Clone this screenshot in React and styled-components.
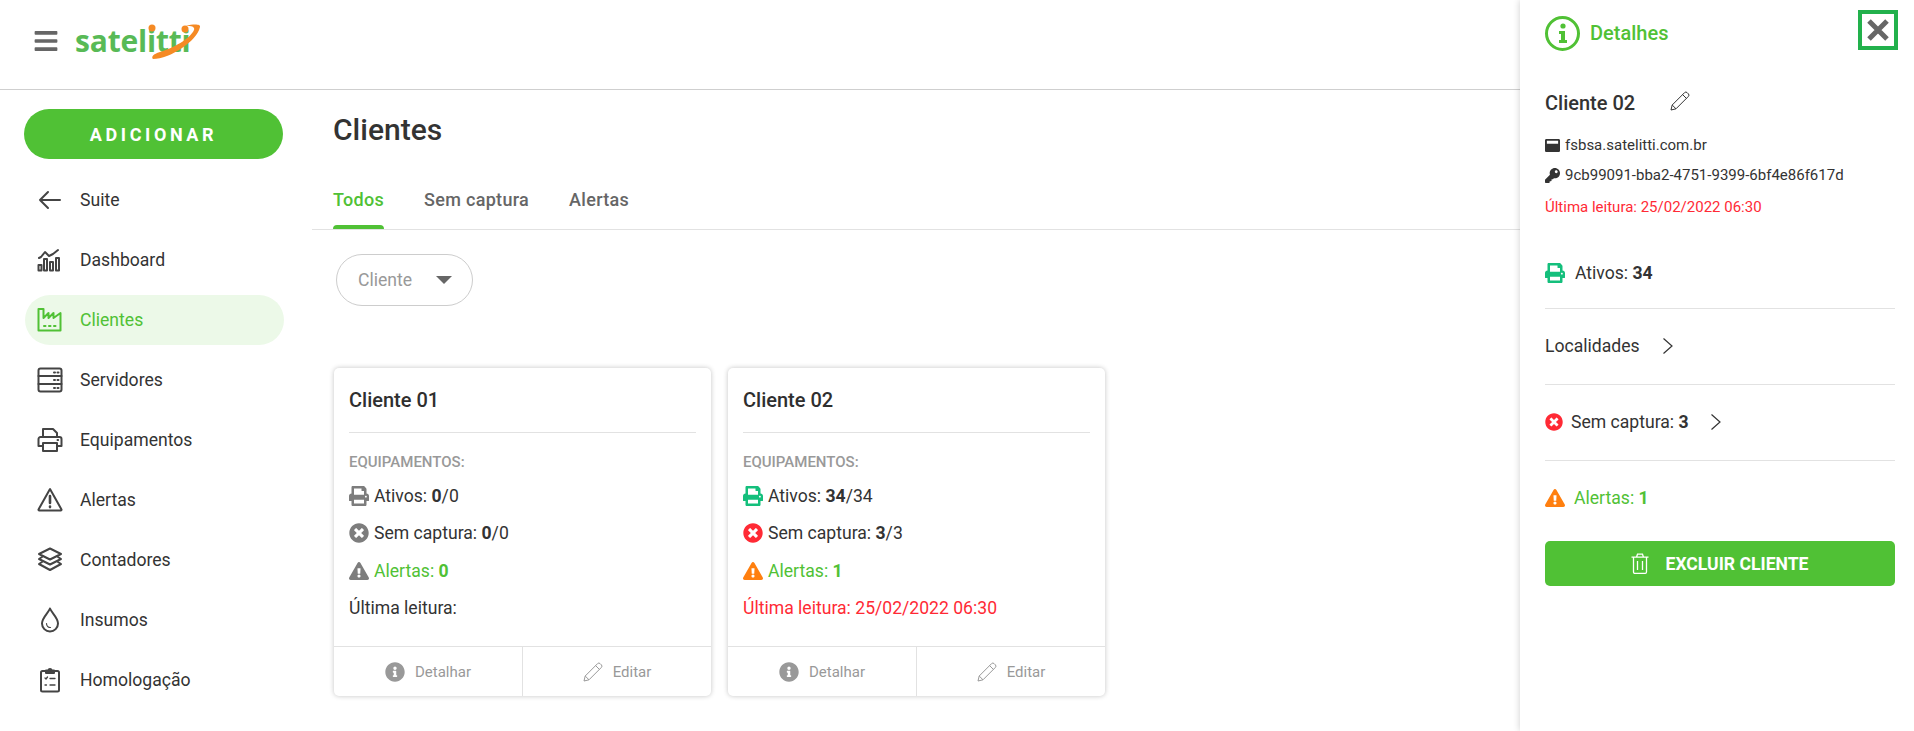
import React from "react";
import styled, { createGlobalStyle } from "styled-components";
import { FaBars, FaExclamationTriangle, FaInfoCircle, FaKey, FaPrint, FaTimesCircle, FaWindowMaximize } from "react-icons/fa";

const GREEN = "#50c135";
const RED = "#ff2a35";
const ORANGE = "#ff7f0f";
const TEAL = "#14bf7c";
const GREY_ICON = "#7d7d7d";

const GlobalStyle = createGlobalStyle`
  html, body {
    margin: 0;
    height: 100%;
    overflow: hidden;
    background: #fff;
  }
  body {
    font-family: Roboto, "Liberation Sans", sans-serif;
    color: #333;
  }
  * { box-sizing: border-box; }
`;

const Page = styled.div`
  display: flex;
  width: 1914px;
  height: 731px;
  overflow: hidden;
`;

const Left = styled.div`
  flex: 1;
  min-width: 0;
  display: flex;
  flex-direction: column;
`;

const Header = styled.header`
  height: 90px;
  flex: none;
  display: flex;
  align-items: center;
  gap: 16px;
  padding: 0 0 8px 33px;
  border-bottom: 1px solid #cfcfcf;
  color: #666;
`;

const LogoWrap = styled.div`
  position: relative;
  width: 130px;
  height: 40px;
`;

const LogoText = styled.span`
  font-family: "Open Sans", sans-serif;
  font-weight: 700;
  font-size: 30px;
  line-height: 40px;
  letter-spacing: -0.2px;
  color: #58ba56;
`;

const LogoOrbit = styled.svg`
  position: absolute;
  left: 0;
  top: 0;
`;

const Body = styled.div`
  flex: 1;
  display: flex;
  min-height: 0;
`;

const Sidebar = styled.nav`
  width: 312px;
  flex: none;
  padding: 19px 0 0 24px;
  display: flex;
  flex-direction: column;
`;

const AddButton = styled.button`
  width: 259px;
  height: 50px;
  flex: none;
  border: 0;
  border-radius: 25px;
  margin-bottom: 16px;
  background: ${GREEN};
  color: #fff;
  font-family: inherit;
  font-size: 18px;
  font-weight: 700;
  letter-spacing: 3.6px;
`;

const NavList = styled.div`
  display: flex;
  flex-direction: column;
  gap: 10px;
`;

const NavItem = styled.a`
  width: 259px;
  height: 50px;
  margin-left: 1px;
  display: flex;
  align-items: center;
  gap: 17px;
  padding-left: 12px;
  border-radius: 25px;
  font-size: 17.6px;
  color: ${(p) => (p.$active ? GREEN : "#333")};
  background: ${(p) => (p.$active ? "#ecf9e8" : "transparent")};
`;

const NavIcon = styled.svg`
  width: 26px;
  height: 26px;
  flex: none;
  fill: none;
  stroke: ${(p) => (p.$active ? GREEN : "#444")};
  stroke-width: 2;
  stroke-linejoin: round;
  stroke-linecap: round;
`;

const Main = styled.main`
  flex: 1;
  min-width: 0;
`;

const Title = styled.h1`
  margin: 20px 0 20px 21px;
  height: 40px;
  font-size: 30px;
  line-height: 40px;
  font-weight: 500;
  color: #333;
`;

const Tabs = styled.div`
  height: 60px;
  display: flex;
  gap: 40px;
  padding-left: 21px;
  border-bottom: 1px solid #e2e2e2;
`;

const Tab = styled.div`
  position: relative;
  height: 60px;
  line-height: 60px;
  font-size: 18px;
  font-weight: 500;
  letter-spacing: 0.3px;
  color: ${(p) => (p.$active ? GREEN : "#666")};

  &::after {
    content: "";
    display: ${(p) => (p.$active ? "block" : "none")};
    position: absolute;
    left: 0;
    right: 0;
    bottom: 1px;
    height: 4px;
    background: ${GREEN};
    border-radius: 4px 4px 0 0;
  }
`;

const Filter = styled.div`
  width: 137px;
  height: 52px;
  margin: 24px 0 0 24px;
  padding: 0 20px 0 21px;
  display: flex;
  align-items: center;
  justify-content: space-between;
  border: 1px solid #cdcdcd;
  border-radius: 26px;
  font-size: 17.6px;
  color: #999;
`;

const Caret = styled.span`
  width: 0;
  height: 0;
  border-left: 8px solid transparent;
  border-right: 8px solid transparent;
  border-top: 8px solid #666;
`;

const Cards = styled.div`
  display: flex;
  gap: 17px;
  margin: 62px 0 0 22px;
`;

const Card = styled.article`
  width: 377px;
  height: 328px;
  display: flex;
  flex-direction: column;
  border-radius: 5px;
  background: #fff;
  box-shadow: 0 0 5px rgba(0, 0, 0, 0.24);
`;

const CardHead = styled.div`
  height: 65px;
  margin: 0 15px;
  border-bottom: 1px solid #e2e2e2;
  font-size: 20px;
  font-weight: 500;
  line-height: 64px;
  color: #2f2f2f;
`;

const CardBody = styled.div`
  padding: 14px 15px 0;
  display: grid;
  grid-template-rows: 30px 37px 38px 37px 37px;
`;

const Caption = styled.div`
  line-height: 30px;
  font-size: 15px;
  font-weight: 500;
  color: #999;
`;

const Line = styled.div`
  display: flex;
  align-items: center;
  gap: 5px;
  font-size: 17.6px;
  color: ${(p) => p.$color || "#333"};

  b { font-weight: 700; }
`;

const CardFooter = styled.div`
  margin-top: auto;
  height: 50px;
  display: grid;
  grid-template-columns: 188px 1fr;
  border-top: 1px solid #e2e2e2;
`;

const FooterAction = styled.div`
  display: flex;
  align-items: center;
  justify-content: center;
  gap: 10px;
  font-size: 15px;
  color: #999;

  & + & { border-left: 1px solid #e2e2e2; }
`;

const Panel = styled.aside`
  width: 394px;
  height: 731px;
  flex: none;
  padding: 0 19px 0 25px;
  position: relative;
  background: #fff;
  box-shadow: 0 0 7px rgba(0, 0, 0, 0.2);
`;

const PanelHead = styled.div`
  height: 66px;
  display: flex;
  align-items: center;
  gap: 10px;
  font-size: 20px;
  font-weight: 500;
  color: ${GREEN};
`;

const InfoRing = styled.span`
  width: 35px;
  height: 35px;
  border: 3px solid ${GREEN};
  border-radius: 50%;
  display: flex;
  align-items: center;
  justify-content: center;
`;

const CloseBox = styled.button`
  width: 40px;
  height: 40px;
  margin: -6px -3px 0 auto;
  padding: 0;
  display: flex;
  align-items: center;
  justify-content: center;
  background: #fff;
  border: 4px solid #22b14c;
`;

const ClientRow = styled.div`
  height: 40px;
  margin-top: 17px;
  display: flex;
  align-items: center;
  gap: 35px;
  font-size: 20px;
  font-weight: 500;
  color: #333;

  svg { margin-top: -5px; }
`;

const MetaList = styled.div`
  margin-top: 7px;
  display: grid;
  grid-auto-rows: 30px;
`;

const Meta = styled.div`
  display: flex;
  align-items: center;
  gap: 5px;
  font-size: 15px;
  color: ${(p) => p.$color || "#333"};
`;

const LastRead = styled.div`
  height: 30px;
  margin-top: 2px;
  line-height: 30px;
  font-size: 15px;
  color: ${RED};
`;

const Sections = styled.div`
  margin-top: 16px;
`;

const Section = styled.div`
  height: ${(p) => p.$height}px;
  padding-bottom: ${(p) => p.$lift || 0}px;
  display: flex;
  align-items: center;
  gap: ${(p) => p.$gap || 8}px;
  font-size: 17.6px;
  color: ${(p) => p.$color || "#333"};
  border-bottom: ${(p) => (p.$plain ? "0" : "1px solid #e2e2e2")};

  b { font-weight: 700; }
`;

const Chevron = styled.svg`
  width: 12px;
  height: 18px;
  margin-left: ${(p) => p.$offset}px;
  fill: none;
  stroke: #333;
  stroke-width: 1.2;
`;

const DeleteButton = styled.button`
  width: 350px;
  height: 45px;
  margin-top: 7px;
  display: flex;
  align-items: center;
  justify-content: center;
  gap: 16px;
  border: 0;
  border-radius: 5px;
  background: ${GREEN};
  color: #fff;
  font-family: inherit;
  font-size: 17.6px;
  font-weight: 700;
`;

const PencilIcon = ({ size, color }) => (
  <svg width={size} height={size} viewBox="0 0 20 20" fill="none" stroke={color} strokeWidth="1" strokeLinejoin="round">
    <path d="M1 19l1.2-5L14.6 1.6a1.8 1.8 0 0 1 2.5 0l1.3 1.3a1.8 1.8 0 0 1 0 2.5L6 17.8z" />
    <path d="M12.6 3.6l3.8 3.8M2.2 14L6 17.8" />
  </svg>
);

const TrashIcon = () => (
  <svg width="18" height="21" viewBox="0 0 18 21" fill="none" stroke="#fff" strokeWidth="1.3">
    <path d="M0.5 4.2h17M2.5 4.2V19a1.3 1.3 0 0 0 1.3 1.3h10.4a1.3 1.3 0 0 0 1.3-1.3V4.2M5.5 4.2l1-3h5l1 3M6.5 8v9M11.5 8v9" />
  </svg>
);

const RightChevron = ({ offset }) => (
  <Chevron $offset={offset} viewBox="0 0 12 18">
    <path d="M1.5 1.5L10 9l-8.5 7.5" />
  </Chevron>
);

const NAV = [
  { label: "Suite", icon: <path d="M23 13H3M11 5l-8 8 8 8" /> },
  {
    label: "Dashboard",
    icon: (
      <>
        <path d="M2 11l2-1 4-5 4 4 4-2 5-4" />
        <rect x="1.500" y="18" width="3" height="5.500" />
        <rect x="7" y="12" width="3" height="11.500" />
        <rect x="13" y="15" width="3" height="8.500" />
        <rect x="19" y="11" width="3" height="12.500" />
      </>
    ),
  },
  {
    label: "Clientes",
    active: true,
    icon: (
      <>
        <path d="M1.500 2h5v9l5-5v5l5-5v5l7-5v17.500h-22z" />
        <path d="M7 19h1.500M12 19h1.500M17 19h1.500" />
      </>
    ),
  },
  {
    label: "Servidores",
    icon: (
      <>
        <rect x="1.500" y="1.500" width="23" height="23" rx="2" />
        <path d="M1.500 9h23M1.500 17h23M17 5.500h1M20.500 5.500h1M17 13h1M20.500 13h1M17 21h1M20.500 21h1" />
      </>
    ),
  },
  {
    label: "Equipamentos",
    icon: (
      <>
        <path d="M6 10V2h10l4 4v4" />
        <path d="M6 19H1.500v-7a2 2 0 0 1 2-2h19a2 2 0 0 1 2 2v7H20" />
        <rect x="6" y="16" width="14" height="8" />
        <path d="M20.500 13h.6" />
      </>
    ),
  },
  {
    label: "Alertas",
    icon: (
      <>
        <path d="M13 2L1.500 22.500a.8.8 0 0 0 .7 1h21.600a.8.8 0 0 0 .7-1z" />
        <path d="M13 9v7M13 19.500v.6" strokeWidth="2.600" />
      </>
    ),
  },
  {
    label: "Contadores",
    icon: (
      <>
        <path d="M13 1.500l11 5.500-11 5.500L2 7z" />
        <path d="M5 10L2 12l11 5.500L24 12l-3-2" />
        <path d="M5 15l-3 2 11 6 11-6-3-2" />
      </>
    ),
  },
  {
    label: "Insumos",
    icon: (
      <>
        <path d="M13 1.500c-2 5-8 9-8 15a8 8 0 0 0 16 0c0-6-6-10-8-15z" />
        <path d="M9.500 16.500c0 2.500 2 4 4 4" strokeWidth="1.200" />
      </>
    ),
  },
  {
    label: "Homologação",
    icon: (
      <>
        <rect x="4" y="4" width="18" height="20.500" rx="1.500" />
        <path d="M9 4V3.500h2.500a1.500 1.500 0 0 1 3 0H17V6H9z" />
        <path d="M8 11l1 1 1.500-2M13 11.500h5M8 18h1.500M13 18h5" strokeWidth="1.300" />
      </>
    ),
  },
];

const CLIENTS = [
  {
    name: "Cliente 01",
    printer: GREY_ICON,
    error: GREY_ICON,
    warning: GREY_ICON,
    active: "0",
    activeTotal: "0",
    missing: "0",
    missingTotal: "0",
    alerts: "0",
    lastRead: "Última leitura:",
    lastColor: "#333",
  },
  {
    name: "Cliente 02",
    printer: TEAL,
    error: RED,
    warning: ORANGE,
    active: "34",
    activeTotal: "34",
    missing: "3",
    missingTotal: "3",
    alerts: "1",
    lastRead: "Última leitura: 25/02/2022 06:30",
    lastColor: RED,
  },
];

const Logo = () => (
  <LogoWrap>
    <LogoText>satelitti</LogoText>
    <LogoOrbit width="130" height="40" viewBox="0 0 130 40" fill="none">
      <circle cx="77" cy="7" r="3.500" fill="#f58a24" />
      <circle cx="110" cy="8" r="3.500" fill="#f58a24" />
      <path d="M78 38C95 38 122 20 125 6C126 3 118 3 111 5C117 4.500 120 6 119 9C115 18 98 27 85 31C78 33 76 36 78 38z" fill="#f58a24" />
    </LogoOrbit>
  </LogoWrap>
);

const App = () => {
  return (
    <Page>
      <GlobalStyle />
      <Left>
        <Header>
          <FaBars size={26} />
          <Logo />
        </Header>
        <Body>
          <Sidebar>
            <AddButton>ADICIONAR</AddButton>
            <NavList>
              {NAV.map((item) => (
                <NavItem key={item.label} $active={item.active}>
                  <NavIcon viewBox="0 0 26 26" $active={item.active}>
                    {item.icon}
                  </NavIcon>
                  {item.label}
                </NavItem>
              ))}
            </NavList>
          </Sidebar>
          <Main>
            <Title>Clientes</Title>
            <Tabs>
              <Tab $active>Todos</Tab>
              <Tab>Sem captura</Tab>
              <Tab>Alertas</Tab>
            </Tabs>
            <Filter>
              Cliente
              <Caret />
            </Filter>
            <Cards>
              {CLIENTS.map((c) => (
                <Card key={c.name}>
                  <CardHead>{c.name}</CardHead>
                  <CardBody>
                    <Caption>EQUIPAMENTOS:</Caption>
                    <Line>
                      <FaPrint size={20} color={c.printer} />
                      <span>
                        Ativos: <b>{c.active}</b>/{c.activeTotal}
                      </span>
                    </Line>
                    <Line>
                      <FaTimesCircle size={20} color={c.error} />
                      <span>
                        Sem captura: <b>{c.missing}</b>/{c.missingTotal}
                      </span>
                    </Line>
                    <Line $color={GREEN}>
                      <FaExclamationTriangle size={20} color={c.warning} />
                      <span>
                        Alertas: <b>{c.alerts}</b>
                      </span>
                    </Line>
                    <Line $color={c.lastColor}>{c.lastRead}</Line>
                  </CardBody>
                  <CardFooter>
                    <FooterAction>
                      <FaInfoCircle size={20} color="#999" />
                      Detalhar
                    </FooterAction>
                    <FooterAction>
                      <PencilIcon size={20} color="#999" />
                      Editar
                    </FooterAction>
                  </CardFooter>
                </Card>
              ))}
            </Cards>
          </Main>
        </Body>
      </Left>
      <Panel>
        <PanelHead>
          <InfoRing>
            <svg width="10" height="20" viewBox="0 0 10 20" fill={GREEN}>
              <circle cx="5" cy="3" r="2.600" />
              <path d="M1 8h6v9h2v3H1v-3h2v-6H1z" />
            </svg>
          </InfoRing>
          Detalhes
          <CloseBox>
            <svg width="22" height="22" viewBox="0 0 22 22" stroke="#666" strokeWidth="5">
              <path d="M2 2l18 18M20 2L2 20" />
            </svg>
          </CloseBox>
        </PanelHead>
        <ClientRow>
          Cliente 02
          <PencilIcon size={20} color="#333" />
        </ClientRow>
        <MetaList>
          <Meta>
            <FaWindowMaximize size={15} />
            fsbsa.satelitti.com.br
          </Meta>
          <Meta>
            <FaKey size={15} />
            9cb99091-bba2-4751-9399-6bf4e86f617d
          </Meta>
        </MetaList>
        <LastRead>Última leitura: 25/02/2022 06:30</LastRead>
        <Sections>
          <Section $height={71} $gap={10}>
            <FaPrint size={20} color={TEAL} />
            <span>
              Ativos: <b>34</b>
            </span>
          </Section>
          <Section $height={76} $lift={2}>
            Localidades
            <RightChevron offset={14} />
          </Section>
          <Section $height={76} $lift={2}>
            <FaTimesCircle size={18} color={RED} />
            <span>
              Sem captura: <b>3</b>
            </span>
            <RightChevron offset={13} />
          </Section>
          <Section $height={73} $gap={9} $color={GREEN} $plain>
            <FaExclamationTriangle size={20} color={ORANGE} />
            <span>
              Alertas: <b>1</b>
            </span>
          </Section>
        </Sections>
        <DeleteButton>
          <TrashIcon />
          EXCLUIR CLIENTE
        </DeleteButton>
      </Panel>
    </Page>
  );
};

export default App;
